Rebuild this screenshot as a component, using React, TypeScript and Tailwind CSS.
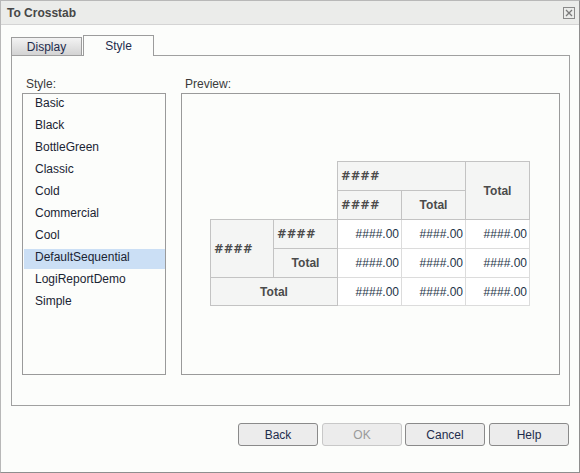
const styles = [
  "Basic",
  "Black",
  "BottleGreen",
  "Classic",
  "Cold",
  "Commercial",
  "Cool",
  "DefaultSequential",
  "LogiReportDemo",
  "Simple",
];

function Hash() {
  return <span className="font-['DejaVu_Sans',sans-serif] text-[11.5px] font-bold">####</span>;
}

function Data() {
  return (
    <div className="bg-white border-r border-b border-[#dcdcdc] flex items-center justify-end pr-[2px] text-[#1e3448]">
      ####.00
    </div>
  );
}

export default function App() {
  const hb = "border-[#c3c3c3] bg-[#f4f5f4] font-bold text-[#4b4b4b] flex items-center";
  return (
    <div className="w-[580px] h-[473px] flex flex-col border border-[#b8b8b8] border-r-[#8e8e8e] border-b-[#8e8e8e] bg-[#fcfdfb] font-['Liberation_Sans',Arial,sans-serif] text-[12px] leading-[14px]">
      <div className="h-[24px] shrink-0 flex items-center bg-[#ebecea] border-b border-[#d4d4d4] pl-[6px] pr-[4px]">
        <span className="font-bold text-[#474747] mt-[1px]">To Crosstab</span>
        <div className="ml-auto mt-[1px] w-[12px] h-[12px] border border-[#8a8a8a] flex items-center justify-center">
          <svg width="8" height="8" viewBox="0 0 8 8">
            <path d="M1 1L7 7M7 1L1 7" stroke="#7a7a7a" strokeWidth="1.3" />
          </svg>
        </div>
      </div>

      <div className="flex flex-col pl-[10px] pr-[9px] pt-[10px]">
        <div className="h-[20px] flex items-start">
          <div className="mt-[2px] h-[18px] w-[71px] border-t border-x border-[#9c9c9c] bg-gradient-to-b from-[#f3f3f3] to-[#d3d3d3] flex items-center justify-center text-[#1f2c4d]">
            Display
          </div>
          <div className="ml-[1px] h-[21px] w-[71px] border-t border-x border-[#9c9c9c] bg-[#fcfdfb] relative z-10 flex items-center justify-center text-[#1f2c4d]">
            Style
          </div>
        </div>

        <div className="h-[351px] border border-[#a0a0a0] flex pt-[21px] pl-[10px] pr-[9px] gap-[15px]">
          <div className="w-[144px] flex flex-col">
            <div className="h-[14px] mb-[2px] pl-[4px] text-[#3a3a3a]">Style:</div>
            <div className="h-[282px] border border-[#9a9a9a] pt-[1px] flex flex-col">
              {styles.map((s) => (
                <div
                  key={s}
                  className={
                    "h-[20px] mb-[2px] ml-[1px] pl-[11px] leading-[16px] text-[#1a2433] " +
                    (s === "DefaultSequential" ? "bg-[#cbdff5]" : "")
                  }
                >
                  {s}
                </div>
              ))}
            </div>
          </div>

          <div className="flex-1 flex flex-col">
            <div className="h-[14px] mb-[2px] pl-[4px] text-[#3a3a3a]">Preview:</div>
            <div className="h-[282px] border border-[#9a9a9a] pt-[67px] pl-[28px]">
              <div className="grid grid-cols-[64px_64px_64px_64px_64px] grid-rows-[30px_29px_29px_29px_28px]">
                <div className="col-span-2 row-span-2 border-r border-b border-[#c3c3c3]" />
                <div className={"col-span-2 border-t border-r border-b pl-[3px] " + hb}>
                  <Hash />
                </div>
                <div className={"row-span-2 border-t border-r border-b justify-center " + hb}>
                  Total
                </div>
                <div className={"border-r border-b pl-[3px] " + hb}>
                  <Hash />
                </div>
                <div className={"border-r border-b justify-center " + hb}>Total</div>

                <div className={"row-span-2 border-l border-r border-b pl-[3px] " + hb}>
                  <Hash />
                </div>
                <div className={"border-r border-b pl-[3px] " + hb}>
                  <Hash />
                </div>
                <Data />
                <Data />
                <Data />

                <div className={"border-r border-b justify-center " + hb}>Total</div>
                <Data />
                <Data />
                <Data />

                <div className={"col-span-2 border-l border-r border-b justify-center " + hb}>
                  Total
                </div>
                <Data />
                <Data />
                <Data />
              </div>
            </div>
          </div>
        </div>

        <div className="mt-[17px] flex">
          <div className="ml-[227px] w-[80px] h-[23px] border border-[#8a8a8a] rounded-[3px] bg-[#ececec] flex items-center justify-center text-[#1f2c4d]">
            Back
          </div>
          <div className="ml-[4px] w-[80px] h-[23px] border border-[#c8c8c8] rounded-[3px] bg-[#ececec] flex items-center justify-center text-[#9a9a9a]">
            OK
          </div>
          <div className="ml-[3px] w-[80px] h-[23px] border border-[#8a8a8a] rounded-[3px] bg-[#ececec] flex items-center justify-center text-[#1f2c4d]">
            Cancel
          </div>
          <div className="ml-[4px] w-[80px] h-[23px] border border-[#8a8a8a] rounded-[3px] bg-[#ececec] flex items-center justify-center text-[#1f2c4d]">
            Help
          </div>
        </div>
      </div>
    </div>
  );
}
